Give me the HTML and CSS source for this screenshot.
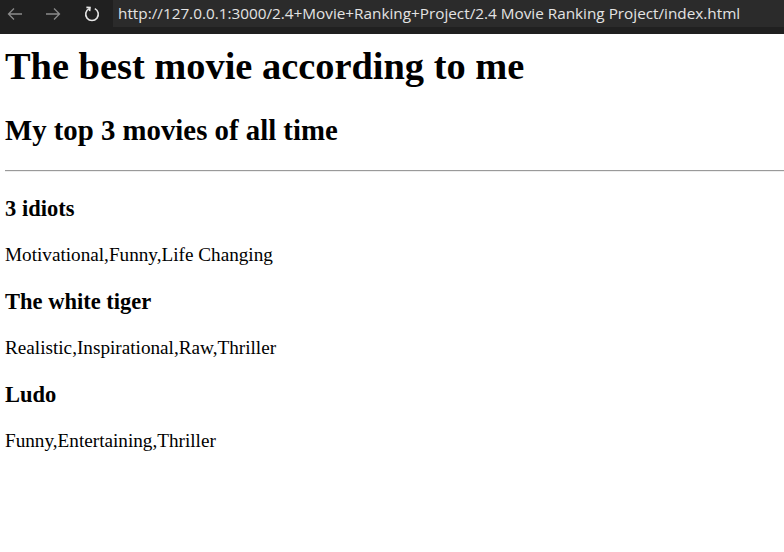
FILE: index.html
```html
<!DOCTYPE html>
<html>
<head>
<meta charset="utf-8">
<title>Movie Ranking</title>
<link rel="stylesheet" href="styles.css">
</head>
<body>
<div class="toolbar">
  <div class="nav">
    <svg class="icon back" width="18" height="18" viewBox="0 0 18 18"><path d="M16 9H2.5M8 3.5L2.5 9L8 14.5" fill="none" stroke="currentColor" stroke-width="1.3"/></svg>
    <svg class="icon fwd" width="18" height="18" viewBox="0 0 18 18"><path d="M2 9H15.5M10 3.5L15.5 9L10 14.5" fill="none" stroke="currentColor" stroke-width="1.3"/></svg>
    <svg class="icon reload" width="18" height="18" viewBox="0 0 18 18"><path d="M6.2 3.6A6.3 6.3 0 1 0 11.8 3.6" fill="none" stroke="currentColor" stroke-width="1.6"/><path d="M3.4 2.4L7 2.6L6.6 6.2" fill="none" stroke="currentColor" stroke-width="1.6"/></svg>
  </div>
  <div class="url">http://127.0.0.1:3000/2.4+Movie+Ranking+Project/2.4 Movie Ranking Project/index.html</div>
</div>
<main class="page">
  <h1 class="title">The best movie according to me</h1>
  <h2 class="subtitle">My top 3 movies of all time</h2>
  <hr class="rule">
  <h3 class="movie first">3 idiots</h3>
  <p class="tags">Motivational,Funny,Life Changing</p>
  <h3 class="movie">The white tiger</h3>
  <p class="tags">Realistic,Inspirational,Raw,Thriller</p>
  <h3 class="movie">Ludo</h3>
  <p class="tags">Funny,Entertaining,Thriller</p>
</main>
</body>
</html>
```
FILE: styles.css
```css
html, body {
  margin: 0;
  padding: 0;
  background: #ffffff;
}
body {
  font-family: "Liberation Serif", "Times New Roman", serif;
  color: #000;
  overflow: hidden;
}
.toolbar {
  height: 34px;
  background: #202020;
  display: flex;
  align-items: flex-start;
}
.nav {
  width: 113px;
  height: 27px;
  display: flex;
  align-items: center;
}
.icon {
  display: block;
}
.back {
  color: #8a8a8a;
  margin-left: 6px;
}
.fwd {
  color: #8a8a8a;
  margin-left: 20px;
}
.reload {
  color: #e6e6e6;
  margin-left: 21px;
}
.url {
  flex: 1;
  height: 27px;
  background: #2b2b2b;
  color: #e3e3e3;
  font-family: "Open Sans", "Noto Sans", sans-serif;
  font-size: 15.3px;
  line-height: 26px;
  padding-left: 5px;
  white-space: nowrap;
  overflow: hidden;
}
.page {
  padding-left: 5px;
}
.title {
  font-size: 38.4px;
  font-weight: bold;
  line-height: 45px;
  margin: 10px 0 0 0;
}
.subtitle {
  font-size: 28.8px;
  font-weight: bold;
  line-height: 33px;
  margin: 25px 0 0 0;
}
.rule {
  margin: 23px 0 0 0;
  border: 0;
  border-top: 1px solid #9a9a9a;
  border-bottom: 1px solid #eeeeee;
  height: 0;
}
.movie {
  font-size: 22.5px;
  font-weight: bold;
  line-height: 26px;
  margin: 23px 0 0 0;
}
.movie.first {
  margin-top: 24px;
}
.tags {
  font-size: 19.2px;
  line-height: 22px;
  margin: 22px 0 0 0;
}
```
